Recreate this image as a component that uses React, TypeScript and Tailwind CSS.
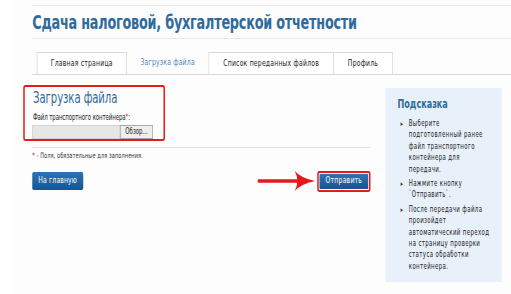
const tabs = [
  { label: "Главная страница", w: "w-[120px]" },
  { label: "Загрузка файла", w: "w-[111px]", active: true },
  { label: "Список переданных файлов", w: "w-[167px]" },
  { label: "Профиль", w: "w-[80px]" },
]

// lines broken as on the original page
const hints = [
  ["Выберите", "подготовленный ранее", "файл транспортного", "контейнера для", "передачи."],
  ["Нажмите кнопку", "`Отправить`."],
  ["После передачи файла", "произойдет", "автоматический переход", "на страницу проверки", "статуса обработки", "контейнера."],
]

export default function App() {
  return (
    <div className="w-[511px] h-[294px] overflow-hidden bg-white">
      {/* the screenshot's text is horizontally squeezed, so the page is laid out wider and scaled */}
      <div className="h-[294px] w-[682px] origin-top-left scale-x-[0.75] font-['DejaVu_Sans_Condensed','DejaVu_Sans',sans-serif] text-[#222]">
        <div className="ml-[16px] h-full bg-[#fdfdfe] pl-[27px] pt-[5px]">
          {/* header */}
          <div className="border-t border-[#e6e8eb]">
            <h1 className="h-[32px] pt-[5px] text-[19px] font-bold leading-[22px] tracking-[-0.3px] text-[#2f6b9b]">
              Сдача налоговой, бухгалтерской отчетности
            </h1>
          </div>

          {/* tabs */}
          <div className="border-t border-[#e6e8eb] pt-[13px]">
            <div className="flex border-b border-[#d6dade] pl-[6px]">
              {tabs.map((t, i) => (
                <div
                  key={t.label}
                  className={`${t.w} flex h-[22px] items-center justify-center text-[9px] tracking-[0.3px] ${
                    t.active
                      ? "text-[#4f86bb]"
                      : "border border-b-0 border-[#d6dade] bg-white text-[#222]"
                  } ${i === 0 ? "" : "-ml-px"}`}
                >
                  {t.label}
                </div>
              ))}
            </div>
          </div>

          <div className="flex">
            {/* left column */}
            <div className="w-[451px]">
              <div className="-ml-[12px] mt-[10px] h-[56px] w-[189px] rounded-[3px] border-2 border-[#e21b1b] pl-[11px] pt-[2px]">
                <h2 className="text-[15px] leading-[18px] tracking-[-0.1px] text-[#2f6b9b]">Загрузка файла</h2>
                <div className="mt-[6px] whitespace-nowrap text-[8px] leading-[10px] tracking-[-0.1px]">
                  Файл транспортного контейнера<span className="text-[#e21b1b]">*</span>:
                </div>
                <div className="-ml-[1px] mt-[2px] flex h-[14px] w-[161px]">
                  <div className="flex-1 border border-[#d2d2d2] bg-[#e6e6e6]" />
                  <div className="flex w-[44px] items-center justify-center border border-[#a9a9a9] bg-[#eeeeee] text-[8px] leading-none">
                    Обзор...
                  </div>
                </div>
              </div>

              <div className="mt-[6px] border-t border-[#dcdfe3] pt-[3px] text-[7.5px] leading-[9px] tracking-[0.1px] text-[#333]">
                <span className="text-[#e21b1b]">*</span> - Поля, обязательные для заполнения.
              </div>

              <div className="mt-[10px] flex items-center">
                <button className="h-[18px] w-[68px] rounded-[2px] bg-gradient-to-b from-[#2c73b5] to-[#155694] text-[9px] tracking-[0.2px] text-white">
                  На главную
                </button>
                <svg className="ml-auto" width="77" height="22" viewBox="0 0 77 22">
                  <path d="M2 11 L54 11" stroke="#e5191b" strokeWidth="3.5" strokeLinecap="round" />
                  <path d="M50 1 Q58 8 77 11 Q58 14 50 21 Q57 11 50 1 Z" fill="#e5191b" />
                </svg>
                <div className="ml-[3px] rounded-[3px] border-2 border-[#e21b1b] p-[1px]">
                  <button className="block h-[15px] w-[65px] rounded-[1px] bg-gradient-to-b from-[#2c73b5] to-[#155694] text-[9px] tracking-[0.3px] text-white">
                    Отправить
                  </button>
                </div>
              </div>
            </div>

            {/* hint */}
            <div className="ml-[20px] mt-[13px] h-[194px] w-[155px] bg-[#e8f0f9] pl-[16px] pt-[9px]">
              <h3 className="text-[12px] font-bold leading-[15px] text-[#2f6b9b]">Подсказка</h3>
              <ul className="mt-[6px] space-y-[3px] text-[8px] leading-[11.4px] tracking-[0.5px] text-[#222]">
                {hints.map((lines) => (
                  <li key={lines[0]} className="flex">
                    <span className="w-[15px] shrink-0 pl-[3px] text-[6px]">➤</span>
                    <span className="whitespace-nowrap">
                      {lines.map((l) => (
                        <span key={l} className="block">
                          {l}
                        </span>
                      ))}
                    </span>
                  </li>
                ))}
              </ul>
            </div>
          </div>
        </div>
      </div>
    </div>
  )
}
